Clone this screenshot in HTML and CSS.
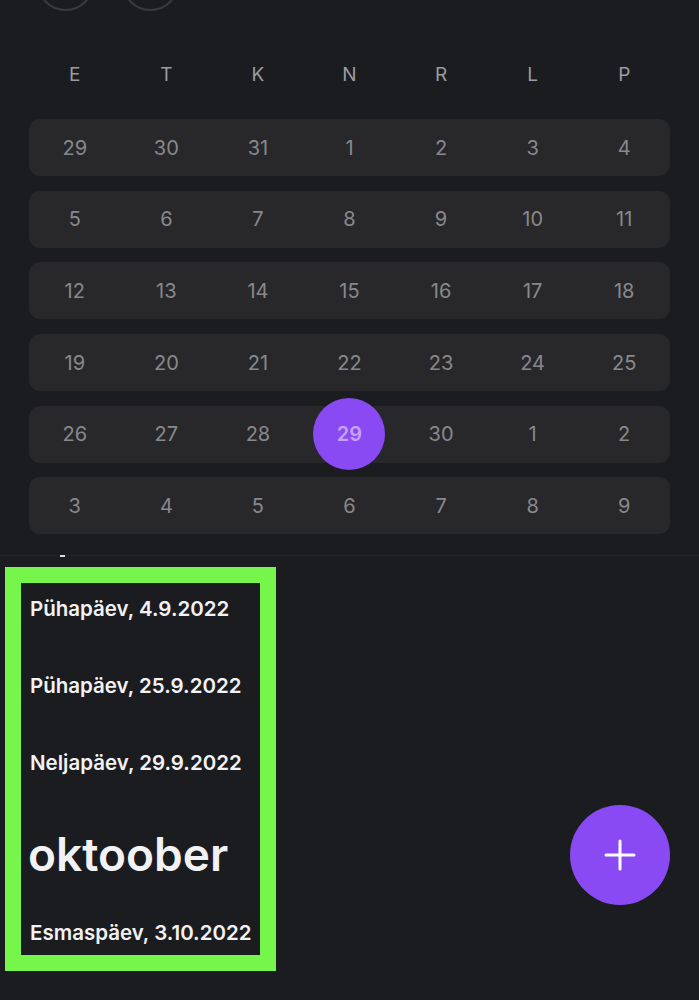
FILE: index.html
```html
<!DOCTYPE html>
<html lang="et">
<head>
    <meta charset="UTF-8">
    <meta name="viewport" content="width=device-width, initial-scale=1.0">
    <title>Kalender</title>
    <link rel="stylesheet" href="styles.css">
</head>
<body>
    <div class="top">
        <div class="ring"></div>
        <div class="ring"></div>
    </div>

    <div class="weekdays">
        <span>E</span><span>T</span><span>K</span><span>N</span><span>R</span><span>L</span><span>P</span>
    </div>

    <div class="month">
        <div class="week"><span>29</span><span>30</span><span>31</span><span>1</span><span>2</span><span>3</span><span>4</span></div>
        <div class="week"><span>5</span><span>6</span><span>7</span><span>8</span><span>9</span><span>10</span><span>11</span></div>
        <div class="week"><span>12</span><span>13</span><span>14</span><span>15</span><span>16</span><span>17</span><span>18</span></div>
        <div class="week"><span>19</span><span>20</span><span>21</span><span>22</span><span>23</span><span>24</span><span>25</span></div>
        <div class="week"><span>26</span><span>27</span><span>28</span><span class="today"><b>29</b></span><span>30</span><span>1</span><span>2</span></div>
        <div class="week"><span>3</span><span>4</span><span>5</span><span>6</span><span>7</span><span>8</span><span>9</span></div>
    </div>

    <div class="list">
        <div class="handle"></div>
        <div class="events">
            <div class="day">Pühapäev, 4.9.2022</div>
            <div class="day">Pühapäev, 25.9.2022</div>
            <div class="day">Neljapäev, 29.9.2022</div>
            <div class="month-title">oktoober</div>
            <div class="day">Esmaspäev, 3.10.2022</div>
        </div>
    </div>

    <button class="fab" aria-label="Lisa">
        <svg width="32" height="32" viewBox="0 0 32 32">
            <path d="M16 2v28M2 16h28" stroke="#fff" stroke-width="3" stroke-linecap="round"/>
        </svg>
    </button>
</body>
</html>
```

FILE: styles.css
```css
body {
    margin: 0;
    background: #1b1c1f;
    font-family: Inter, "Noto Sans", sans-serif;
    color: #9a9a9e;
    height: 1000px;
    overflow: hidden;
    position: relative;
}
.top {
    height: 11px;
    overflow: hidden;
    display: flex;
    align-items: flex-end;
    gap: 28px;
    padding-left: 37px;
}
.ring {
    width: 53px;
    height: 53px;
    flex: none;
    border: 2px solid #3a3b3f;
    border-radius: 50%;
}
.weekdays {
    display: grid;
    grid-template-columns: repeat(7, 1fr);
    margin: 53px 29px 0;
    height: 22px;
    line-height: 22px;
    font-size: 19px;
    text-align: center;
    color: #9c9ca0;
}
.month {
    margin: 33px 29px 0;
    display: flex;
    flex-direction: column;
    gap: 14.7px;
}
.week {
    display: grid;
    grid-template-columns: repeat(7, 1fr);
    grid-template-rows: 57px;
    height: 57px;
    background: #28282b;
    border-radius: 11px;
    font-size: 20px;
    color: #88888c;
}
.week span {
    display: flex;
    align-items: center;
    justify-content: center;
    min-height: 0;
}
.today b {
    width: 72px;
    height: 72px;
    flex: none;
    border-radius: 50%;
    background: #8a4af3;
    color: #c7a3f8;
    font-weight: 600;
    display: flex;
    align-items: center;
    justify-content: center;
}
.list {
    margin-top: 21px;
    border-top: 1px solid #222327;
    position: relative;
    padding: 11px 0 0 5px;
}
.handle {
    position: absolute;
    left: 60px;
    top: -1px;
    width: 5px;
    height: 2px;
    background: #ddd;
}
.events {
    width: 239px;
    height: 372px;
    border: 16px solid #76f54b;
    box-sizing: content-box;
    padding: 0;
    color: #f2f2f4;
}
.day {
    font-size: 20.5px;
    font-weight: 600;
    padding-left: 9px;
    height: 77px;
    line-height: 52px;
}
.month-title {
    font-size: 46px;
    font-weight: 600;
    letter-spacing: 0;
    padding-left: 7px;
    height: 93px;
    line-height: 80px;
}
.fab {
    position: absolute;
    left: 570px;
    top: 805px;
    width: 100px;
    height: 100px;
    border: none;
    border-radius: 50%;
    background: #8a4af3;
    display: flex;
    align-items: center;
    justify-content: center;
    padding: 0;
}
```
